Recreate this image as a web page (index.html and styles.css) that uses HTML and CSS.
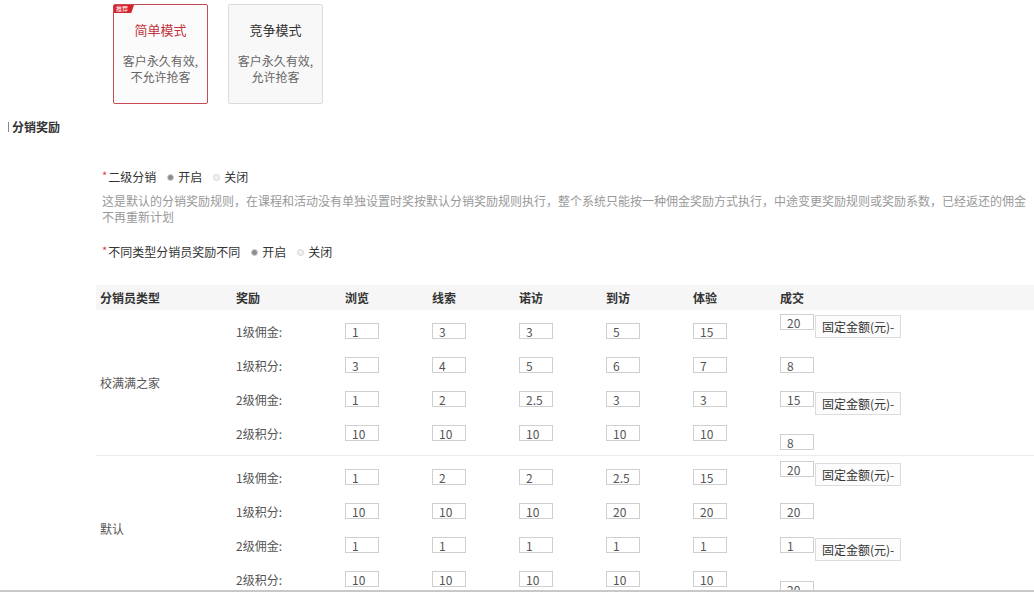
FILE: index.html
```html
<!DOCTYPE html>
<html lang="zh-CN">
<head>
<meta charset="utf-8">
<title>分销奖励</title>
<link rel="stylesheet" href="styles.css">
</head>
<body>
<div class="page">
  <div class="modes">
    <div class="mode mode-active">
      <span class="badge">推荐</span>
      <div class="mode-title">简单模式</div>
      <div class="mode-desc">客户永久有效,<br>不允许抢客</div>
    </div>
    <div class="mode">
      <div class="mode-title">竞争模式</div>
      <div class="mode-desc">客户永久有效,<br>允许抢客</div>
    </div>
  </div>

  <h2 class="section-title">分销奖励</h2>

  <div class="form">
    <div class="field">
      <span class="req">*</span><span class="field-label">二级分销</span>
      <span class="radio radio-on"><i></i>开启</span>
      <span class="radio"><i></i>关闭</span>
    </div>
    <p class="hint">这是默认的分销奖励规则，在课程和活动没有单独设置时奖按默认分销奖励规则执行，整个系统只能按一种佣金奖励方式执行，中途变更奖励规则或奖励系数，已经返还的佣金不再重新计划</p>
    <div class="field field-second">
      <span class="req">*</span><span class="field-label">不同类型分销员奖励不同</span>
      <span class="radio radio-on"><i></i>开启</span>
      <span class="radio"><i></i>关闭</span>
    </div>
  </div>

  <div class="table">
    <div class="thead">
      <div class="th">分销员类型</div>
      <div class="th">奖励</div>
      <div class="th">浏览</div>
      <div class="th">线索</div>
      <div class="th">诺访</div>
      <div class="th">到访</div>
      <div class="th">体验</div>
      <div class="th">成交</div>
    </div>

    <div class="group">
      <div class="type">校满满之家</div>

      <div class="cell">1级佣金:</div>
      <div class="cell"><input class="num" value="1"></div>
      <div class="cell"><input class="num" value="3"></div>
      <div class="cell"><input class="num" value="3"></div>
      <div class="cell"><input class="num" value="5"></div>
      <div class="cell"><input class="num" value="15"></div>
      <div class="deal deal-top"><input class="num" value="20"><span class="select select-a">固定金额(元)-</span></div>

      <div class="cell">1级积分:</div>
      <div class="cell"><input class="num" value="3"></div>
      <div class="cell"><input class="num" value="4"></div>
      <div class="cell"><input class="num" value="5"></div>
      <div class="cell"><input class="num" value="6"></div>
      <div class="cell"><input class="num" value="7"></div>
      <div class="deal"><input class="num" value="8"></div>

      <div class="cell">2级佣金:</div>
      <div class="cell"><input class="num" value="1"></div>
      <div class="cell"><input class="num" value="2"></div>
      <div class="cell"><input class="num" value="2.5"></div>
      <div class="cell"><input class="num" value="3"></div>
      <div class="cell"><input class="num" value="3"></div>
      <div class="deal"><input class="num" value="15"><span class="select">固定金额(元)-</span></div>

      <div class="cell">2级积分:</div>
      <div class="cell"><input class="num" value="10"></div>
      <div class="cell"><input class="num" value="10"></div>
      <div class="cell"><input class="num" value="10"></div>
      <div class="cell"><input class="num" value="10"></div>
      <div class="cell"><input class="num" value="10"></div>
      <div class="deal deal-low"><input class="num" value="8"></div>
    </div>

    <div class="group">
      <div class="type">默认</div>

      <div class="cell">1级佣金:</div>
      <div class="cell"><input class="num" value="1"></div>
      <div class="cell"><input class="num" value="2"></div>
      <div class="cell"><input class="num" value="2"></div>
      <div class="cell"><input class="num" value="2.5"></div>
      <div class="cell"><input class="num" value="15"></div>
      <div class="deal deal-top2"><input class="num" value="20"><span class="select select-b">固定金额(元)-</span></div>

      <div class="cell">1级积分:</div>
      <div class="cell"><input class="num" value="10"></div>
      <div class="cell"><input class="num" value="10"></div>
      <div class="cell"><input class="num" value="10"></div>
      <div class="cell"><input class="num" value="20"></div>
      <div class="cell"><input class="num" value="20"></div>
      <div class="deal"><input class="num" value="20"></div>

      <div class="cell">2级佣金:</div>
      <div class="cell"><input class="num" value="1"></div>
      <div class="cell"><input class="num" value="1"></div>
      <div class="cell"><input class="num" value="1"></div>
      <div class="cell"><input class="num" value="1"></div>
      <div class="cell"><input class="num" value="1"></div>
      <div class="deal"><input class="num" value="1"><span class="select">固定金额(元)-</span></div>

      <div class="cell">2级积分:</div>
      <div class="cell"><input class="num" value="10"></div>
      <div class="cell"><input class="num" value="10"></div>
      <div class="cell"><input class="num" value="10"></div>
      <div class="cell"><input class="num" value="10"></div>
      <div class="cell"><input class="num" value="10"></div>
      <div class="deal deal-low2"><input class="num" value="20"></div>
    </div>
  </div>
</div>
</body>
</html>
```

FILE: styles.css
```css
html, body {
  margin: 0;
  padding: 0;
  background: #fff;
}

body {
  font-family: "Noto Sans CJK SC", "Microsoft YaHei", sans-serif;
  font-size: 12px;
  color: #555;
}

.page {
  height: 590px;
  overflow: hidden;
  border-bottom: 2px solid #c8c8c8;
  box-sizing: content-box;
}

/* ---------- mode cards ---------- */
.modes {
  display: flex;
  gap: 20px;
  padding: 4px 0 0 113px;
}

.mode {
  position: relative;
  width: 93px;
  height: 98px;
  border: 1px solid #dcdcdc;
  border-radius: 2px;
  background: #f8f8f8;
  text-align: center;
  box-sizing: content-box;
}

.mode-active {
  border-color: #c94a52;
  background: #fcfbfb;
}

.badge {
  position: absolute;
  left: 0;
  top: 0;
  width: 20px;
  height: 8px;
  background: #d7232d;
  clip-path: polygon(0 0, 100% 0, 86% 100%, 0 100%);
  color: #fff;
  font-size: 6px;
  line-height: 8px;
  text-align: left;
  padding-left: 2px;
  box-sizing: border-box;
}

.mode-title {
  margin-top: 16px;
  font-size: 13px;
  line-height: 18px;
  color: #333;
}

.mode-active .mode-title {
  color: #c2333b;
}

.mode-desc {
  margin-top: 14px;
  font-size: 12px;
  line-height: 16px;
  color: #666;
}

/* ---------- section title ---------- */
.section-title {
  margin: 15px 0 0 8px;
  padding-left: 4px;
  font-size: 12px;
  line-height: 16px;
  font-weight: bold;
  color: #333;
  position: relative;
}

.section-title::before {
  content: "";
  position: absolute;
  left: 0;
  top: 3px;
  width: 1px;
  height: 10px;
  background: #888;
}

/* ---------- form ---------- */
.form {
  padding-left: 102px;
  margin-top: 34px;
}

.field {
  display: flex;
  align-items: center;
  height: 16px;
  line-height: 16px;
  color: #333;
}

.field-second {
  margin-top: 19px;
}

.req {
  color: #e0393e;
  font-size: 11px;
  margin-right: 1px;
  align-self: flex-start;
  line-height: 12px;
}

.field-label {
  margin-right: 11px;
}

.radio {
  display: inline-flex;
  align-items: center;
  margin-right: 11px;
  color: #333;
}

.radio i {
  display: inline-block;
  width: 5px;
  height: 5px;
  border-radius: 50%;
  border: 1px solid #d5d5d5;
  background: #f0f0f0;
  margin-right: 4px;
}

.radio-on i {
  background: #8c8c8c;
  border-color: #cfcfcf;
}

.hint {
  margin: 8px 0 0;
  width: 928px;
  font-size: 12px;
  line-height: 16px;
  color: #999;
}

/* ---------- table ---------- */
.table {
  margin: 25px 0 0 96px;
}

.thead,
.group {
  display: grid;
  grid-template-columns: 136px 109px repeat(5, 87px) 1fr;
}

.thead {
  height: 25px;
  background: #f6f6f6;
  align-items: center;
}

.th {
  padding-left: 4px;
  font-weight: bold;
  color: #333;
  line-height: 16px;
}

.group {
  grid-auto-rows: 34px;
  padding: 4px 0 5px;
  border-bottom: 1px solid #ececec;
}

.type {
  grid-row: span 4;
  align-self: center;
  padding-left: 4px;
  color: #555;
}

.cell {
  display: flex;
  align-items: center;
  padding-left: 4px;
  color: #555;
}

.deal {
  display: flex;
  align-items: flex-start;
  padding: 9px 0 0 4px;
}

.deal-top { padding-top: 0; }
.deal-top2 { padding-top: 1px; }
.deal-low { padding-top: 18px; }
.deal-low2 { padding-top: 19px; }

.num {
  width: 34px;
  height: 16px;
  box-sizing: border-box;
  border: 1px solid #cfcfcf;
  padding: 0 0 0 6px;
  margin: 0;
  font: 12px/14px "Noto Sans CJK SC", sans-serif;
  color: #555;
  background: #fff;
  outline: none;
}

.select {
  display: inline-flex;
  align-items: center;
  width: 86px;
  height: 23px;
  box-sizing: border-box;
  margin: 1px 0 0 1px;
  padding-left: 6px;
  border: 1px solid #dcdcdc;
  background: #fcfcfc;
  color: #333;
  white-space: nowrap;
}

.select-b { margin-top: 2px; }
```
